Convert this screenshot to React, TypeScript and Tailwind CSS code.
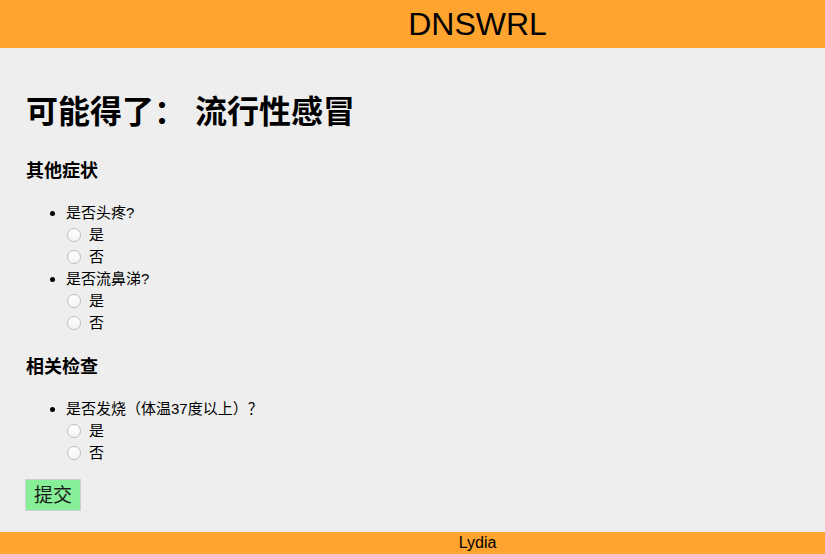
import React from "react";

const font = "font-['Liberation_Sans','Noto_Sans_CJK_SC',sans-serif]";

interface IQuestion {
  id: string;
  text: string;
}

const Choice = ({ name, label }: { name: string; label: string }) => (
  <label className="flex h-[22px] items-center gap-[8px] pl-[1px]">
    <input
      type="radio"
      name={name}
      className="m-0 h-[14px] w-[14px] appearance-none rounded-full border border-[#bdbdbd] bg-gradient-to-b from-white to-[#f4f4f4]"
    />
    <span>{label}</span>
  </label>
);

const QuestionList = ({ items, className }: { items: IQuestion[]; className?: string }) => (
  <ul className={`list-disc pl-[40px] text-[15px] ${className ?? ""}`}>
    {items.map((q) => (
      <li key={q.id}>
        <div className="h-[22px] leading-[22px]">{q.text}</div>
        <Choice name={q.id} label="是" />
        <Choice name={q.id} label="否" />
      </li>
    ))}
  </ul>
);

export default function App() {
  const others: IQuestion[] = [
    { id: "headache", text: "是否头疼?" },
    { id: "runny", text: "是否流鼻涕?" },
  ];
  const checks: IQuestion[] = [{ id: "fever", text: "是否发烧（体温37度以上）？" }];

  return (
    <div className={`${font} min-h-[554px] bg-[#eeeeee] text-black flex flex-col`}>
      <header className="h-12 bg-[#ffa52f] flex items-center justify-center pl-[130px] text-[32px] leading-none">
        DNSWRL
      </header>

      <main className="px-[26px] flex-1">
        <h1 className="mt-[44px] text-[32px] font-bold leading-[40px]">可能得了： 流行性感冒</h1>

        <h3 className="mt-[29px] text-[18px] font-bold leading-[20px]">其他症状</h3>
        <QuestionList items={others} className="mt-[21px]" />

        <h3 className="mt-[23px] text-[18px] font-bold leading-[20px]">相关检查</h3>
        <QuestionList items={checks} className="mt-[21px]" />

        <button className="mt-[15px] -ml-px h-[32px] border border-[#cfcfcf] bg-[#86ef98] px-[8px] text-[19px] leading-none text-[#1a1a1a]">
          提交
        </button>
      </main>

      <footer className="mt-[21px] h-[22px] bg-[#ffa52f] flex items-center justify-center pl-[130px] text-[16px] leading-none">
        Lydia
      </footer>
    </div>
  );
}
